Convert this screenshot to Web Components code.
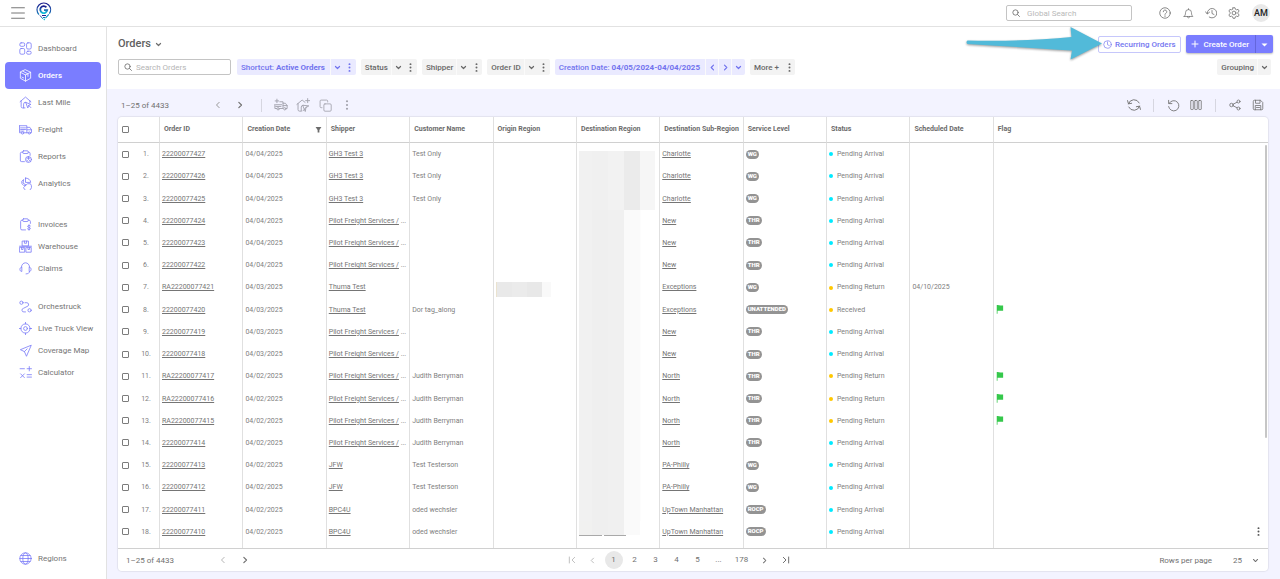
<!DOCTYPE html>
<html lang="en">
<head>
<meta charset="utf-8">
<meta name="viewport" content="width=device-width, initial-scale=1">
<title>Orders</title>
<style>
  html, body { margin: 0; }
  body { font-family: Roboto, "Liberation Sans", sans-serif; font-size: 8px; color: #6f6f6f; background: #fff; }
</style>
</head>
<body>
<order-app></order-app>

<script>
const ICONS = {
  menu: '<path d="M1 3h22M1 12h22M1 21h22"/>',
  down: '<path d="M5 8.500l7 7 7-7"/>',
  left: '<path d="M15.500 4l-8 8 8 8"/>',
  right: '<path d="M8.500 4l8 8-8 8"/>',
  first: '<path d="M20 4l-8 8 8 8M4 3v18"/>',
  last: '<path d="M4 4l8 8-8 8M20 3v18"/>',
  plus: '<path d="M12 3v18M3 12h18"/>',
  caret: '<path d="M4 9h16l-8 8z" fill="currentColor" stroke="none"/>',
  sort: '<path d="M2 3h20l-7 11v8h-6v-8z" fill="currentColor" stroke="none"/>',
  dots: '<g fill="currentColor" stroke="none"><circle cx="12" cy="3" r="2.600"/><circle cx="12" cy="12" r="2.600"/><circle cx="12" cy="21" r="2.600"/></g>',
  search: '<circle cx="10.500" cy="10.500" r="8"/><path d="M16.500 16.500l6 6"/>',
  help: '<circle cx="12" cy="12" r="10.500"/><path d="M8.500 9.500a3.500 3.500 0 1 1 5 3.200c-1.200.6-1.500 1-1.500 2.300M12 17.500v1.500"/>',
  bell: '<path d="M2.500 18.500h19c-2-2-3-4-3-8.500a6.500 6.500 0 0 0-13 0c0 4.500-1 6.500-3 8.500zM12 1.500v2M9.500 18.500a2.500 3 0 0 0 5 0"/>',
  history: '<path d="M4.500 13a9.500 9.500 0 1 1 4 7.200M1 9.500l3.500 4.500L9 10.500M14 7v6l4 2"/>',
  gear: '<path d="M10 1.500h4l.8 3 2.400 1.200 3-1 2 3.400-2.200 2.300v3.200l2.200 2.300-2 3.400-3-1-2.400 1.200-.8 3h-4l-.8-3-2.400-1.200-3 1-2-3.400L4 13.600v-3.200L1.800 8.100l2-3.400 3 1 2.400-1.200z"/><circle cx="12" cy="12" r="3.800"/>',
  clock: '<circle cx="12" cy="12" r="10"/><path d="M12 5v7.500l5 2.500"/>',
  dash: '<rect x="1.500" y="1.500" width="9" height="6.500" rx="2.500"/><rect x="1.500" y="12" width="9" height="10.500" rx="2.500"/><rect x="14" y="1.500" width="8.500" height="11.500" rx="2.500"/><rect x="14" y="17" width="8.500" height="5.500" rx="2.500"/>',
  box: '<path d="M12 1.500l9.500 4.500v11L12 22.500 2.500 17V6zM2.500 6L12 11l9.500-5M12 11v11.500M7 4l9.500 5v4.500M5.500 15l3 1.500"/>',
  home: '<path d="M2 10.500L12 2l10 8.500M4 9v10.500a2.500 2.500 0 0 0 2.500 2.500H11M20 9v3M8.500 22v-7a3.500 3.500 0 0 1 4-3.500M13 12l9 3.500-4 1.500-1.500 4.500zM17.500 17l4.500 4.500"/>',
  truck: '<path d="M1 5h13.500v13H9.500M14.500 8h5.500l3 4.500V18h-1.500M16.500 18h-2M1 5v13h3M14.500 12.500H23M3 9h9M3 12h9M3 15h6"/><circle cx="6.500" cy="18.500" r="2"/><circle cx="19" cy="18.500" r="2"/>',
  report: '<path d="M7 4H5a2.500 2.500 0 0 0-2.500 2.500v12A2.500 2.500 0 0 0 5 21.500h5M17 4h1a2.500 2.500 0 0 1 2.500 2.500V10"/><rect x="7" y="1.500" width="10" height="5" rx="1.500"/><circle cx="17.500" cy="17.500" r="5.500"/><path d="M17.500 12v5.500l4 3.500M15 15l5 0M14 18.500l3 2.500"/>',
  chart: '<path d="M8 5A5.500 5.500 0 1 0 13 15L8 11.500zM12 2v8h9.500A9 8 0 0 0 12 2zM21.500 13a7.500 7.500 0 1 1-13 6.500L15 13z"/>',
  invoice: '<path d="M7 4H5.500A2.500 2.500 0 0 0 3 6.500v13A2.500 2.500 0 0 0 5.500 22H12M17 4h1.500A2.500 2.500 0 0 1 21 6.500V10"/><rect x="7" y="1.500" width="10" height="5" rx="1.500"/><path d="M21 14.500c-1.500-1.500-5.500-1-5 1.200.4 2 5 1.200 5 3.600 0 2.200-4 2.500-5.500.7M18.500 12.500v10"/>',
  warehouse: '<path d="M6.500 2h11v9h-11zM1 11.500h22M1.500 13.500h9v9h-9zM13.500 13.500h9v9h-9zM10 2v4h4V2M4.500 13.500v4h3v-4M16.500 13.500v4h3v-4"/>',
  headset: '<path d="M4.500 9.500C4.500 5 8 1.500 12 1.500S19.500 5 19.500 9.500M4.500 9.500c-4 .5-4 8 0 8zM19.500 9.500c4 .5 4 8 0 8zM19.500 17.500c0 3-3 4.500-6.500 4.500"/>',
  route: '<circle cx="4.500" cy="5" r="3"/><circle cx="19.500" cy="19" r="3"/><path d="M11 5h3.500a3.500 3.500 0 0 1 2 6.200L8 15.500A3.300 3.300 0 0 0 9 22h3"/>',
  target: '<circle cx="12" cy="12" r="8.500"/><circle cx="12" cy="12" r="3.500"/><path d="M12 0v3.500M12 20.500V24M0 12h3.500M20.500 12H24"/>',
  plane: '<path d="M22 2.500L2.500 10.500l7.500 3.500 3.500 8zM10 14l5-5"/>',
  calc: '<path d="M2 5h8M15 5h8M19 1v8M3 14.500l7 7M10 14.500l-7 7M15 16h8M15 20.500h8"/>',
  globe: '<circle cx="12" cy="12" r="10.500"/><ellipse cx="12" cy="12" rx="5" ry="10.500"/><path d="M1.500 12h21M3.500 6.500h17M3.500 17.500h17"/>',
  addtruck: '<path d="M5 2v6M2 5h6M10 6.500h5.500V18h-6M1.500 11v7h3M15.500 9h4l3 4v5H21M15.500 13h7M3 11.500h10M3 14.500h9"/><circle cx="7" cy="18.500" r="2"/><circle cx="18.500" cy="18.500" r="2"/>',
  addhome: '<path d="M1.500 11L10.500 3.500l5 4M3.500 9.500V20A2.500 2.500 0 0 0 6 22.500h3M9 22v-6.500a3 3 0 0 1 3-3M20 1v7M16.500 4.500h7M12 12.500l10 1-5 3-1 6zM18 15l-6 7"/>',
  copy: '<rect x="9" y="9" width="13.500" height="13.500" rx="2"/><path d="M5.500 16H4a2 2 0 0 1-2-2V4a2 2 0 0 1 2-2h10a2 2 0 0 1 2 2v1.500"/>',
  refresh: '<path d="M2.500 10A10 10 0 0 1 21 8.500M21.500 14A10 10 0 0 1 3 15.500M1 4.500L2.500 10l5.500-1M23 19.500L21.500 14l-5.500 1"/>',
  undo: '<path d="M4 8a9.500 9.500 0 1 1-1 6M3 2.500V8.500h6"/>',
  columns: '<rect x="1.500" y="3" width="5" height="18" rx="1"/><rect x="9.500" y="3" width="5" height="18" rx="1"/><rect x="17.500" y="3" width="5" height="18" rx="1"/>',
  share: '<circle cx="5" cy="12" r="3.500"/><circle cx="19" cy="5" r="3"/><circle cx="19" cy="19" r="3"/><path d="M8 10.500L16.300 6.400M8 13.500l8.300 4.100"/>',
  save: '<path d="M2.500 4.500a2 2 0 0 1 2-2H17l4.500 4.500v12.500a2 2 0 0 1-2 2h-15a2 2 0 0 1-2-2zM7 2.500v6h9v-6M6.500 21.500V13h11v8.500M9 17h6"/>',
  flag: '<path d="M2 0h2l8 1.500h7v14l-8-.5-7 .5V23H2z" fill="currentColor" stroke="none"/>'
};

function define(name, html, setup) {
  const tpl = document.createElement('template');
  tpl.innerHTML = html;
  customElements.define(name, class extends HTMLElement {
    constructor() {
      super();
      this.attachShadow({ mode: 'open' }).append(tpl.content.cloneNode(true));
    }
    connectedCallback() {
      if (setup && !this.ready) { this.ready = true; setup(this, this.shadowRoot); }
    }
  });
}

/* <ui-icon name size weight>: one stroked glyph in the current colour */
define('ui-icon', `<style>
  :host { display: inline-flex; flex: none; }
  svg { display: block; fill: none; stroke: currentColor; stroke-linecap: round; stroke-linejoin: round; }
</style>`, (el, root) => {
  const s = el.getAttribute('size') || 12;
  root.innerHTML += `<svg width="${s}" height="${s}" viewBox="0 0 24 24" stroke-width="${el.getAttribute('weight') || 1.6}" aria-hidden="true">${ICONS[el.getAttribute('name')]}</svg>`;
});

/* <icon-button icon label size> */
define('icon-button', `<style>
  :host { display: inline-flex; flex: none; }
  button { display: flex; align-items: center; justify-content: center; width: var(--w, 18px); height: 18px; padding: 0; border: 0; background: none; color: inherit; cursor: pointer; }
</style><button type="button"></button>`, (el, root) => {
  const b = root.querySelector('button');
  b.setAttribute('aria-label', el.getAttribute('label'));
  b.innerHTML = `<ui-icon name="${el.getAttribute('icon')}" size="${el.getAttribute('size') || 13}" weight="${el.getAttribute('weight') || 1.6}"></ui-icon>`;
});

define('brand-mark', `<style>:host { display: block; } svg { display: block; }</style>
<svg width="16" height="19" viewBox="0 0 16 19" role="img" aria-label="Home">
  <defs><linearGradient id="g" x1="0" y1="0" x2="0" y2="1"><stop offset="0" stop-color="#1c1a8c"/><stop offset=".5" stop-color="#1d5fae"/><stop offset="1" stop-color="#10c4dc"/></linearGradient></defs>
  <g fill="none" stroke="url(#g)">
    <path d="M3 12.600A6.800 6.800 0 1 1 12.600 12.600L7.800 18" stroke-width="1.200" stroke-dasharray="30 1 5 1 20"/>
    <path d="M10.400 5.300A3.500 3.500 0 1 0 11.200 8.200H8" stroke-width="1.800"/>
    <path d="M4 13.500l3 3.500M6 13.500h4M7 15.500h2" stroke-width="1"/>
  </g>
</svg>`);

define('app-topbar', `<style>
  :host { display: flex; align-items: center; height: 26px; border-bottom: 1px solid #e2e2e2; background: #fff; padding: 0 10px; color: #6d6d6d; }
  .menu { --w: 15px; }
  brand-mark { margin: 0 auto 4px 11px; }
  .search { display: flex; align-items: center; gap: 7px; box-sizing: border-box; width: 126px; height: 16px; padding: 0 5px; border: 1px solid #c4c4c4; border-radius: 2px; margin-right: 24px; }
  input { flex: 1; min-width: 0; border: 0; padding: 0; outline: 0; background: none; font: inherit; color: #555; }
  input::placeholder { color: #b9b9b9; opacity: 1; }
  .tools { display: flex; align-items: center; gap: 5px; }
  .me { width: 18px; height: 18px; border: 0; border-radius: 50%; padding: 0; margin-left: 4px; background: #e9e9e9; color: #222; font: 500 9px/18px Roboto, sans-serif; }
</style>
<icon-button class="menu" icon="menu" size="14" label="Menu"></icon-button>
<brand-mark></brand-mark>
<label class="search"><ui-icon name="search" size="8" weight="2.500"></ui-icon><input type="search" aria-label="Global Search" placeholder="Global Search"></label>
<div class="tools">
  <icon-button icon="help" label="Help" size="12"></icon-button>
  <icon-button icon="bell" label="Notifications" size="11"></icon-button>
  <icon-button icon="history" label="History" size="12"></icon-button>
  <icon-button icon="gear" label="Settings" size="12"></icon-button>
  <button class="me" type="button">AM</button>
</div>`);

define('nav-item', `<style>
  :host { display: block; }
  a { display: flex; align-items: center; gap: 6px; height: var(--item, 22px); padding-left: 14px; border-radius: 4px; color: #757575; text-decoration: none; white-space: nowrap; }
  ui-icon { color: #7b7df8; }
  :host([active]) a { background: #7a7dff; color: #fff; font-weight: 500; }
  :host([active]) ui-icon { color: #fff; }
</style><a href="#"><ui-icon></ui-icon><slot></slot></a>`, (el, root) => {
  root.querySelector('ui-icon').outerHTML = `<ui-icon name="${el.getAttribute('icon')}" size="13" weight="1.500"></ui-icon>`;
  if (el.hasAttribute('active')) root.querySelector('a').setAttribute('aria-current', 'page');
});

define('app-sidebar', `<style>
  :host { display: flex; flex-direction: column; gap: 16px; box-sizing: border-box; width: 107px; flex: none; padding: 8px 5px 10px; border-right: 1px solid #e2e2e2; background: #fff; }
  .main { --item: 27px; }
  .foot { margin-top: auto; }
</style>
<nav class="main" aria-label="Main">
  <nav-item icon="dash">Dashboard</nav-item>
  <nav-item icon="box" active>Orders</nav-item>
  <nav-item icon="home">Last Mile</nav-item>
  <nav-item icon="truck">Freight</nav-item>
  <nav-item icon="report">Reports</nav-item>
  <nav-item icon="chart">Analytics</nav-item>
</nav>
<nav aria-label="Operations">
  <nav-item icon="invoice">Invoices</nav-item>
  <nav-item icon="warehouse">Warehouse</nav-item>
  <nav-item icon="headset">Claims</nav-item>
</nav>
<nav aria-label="Tools">
  <nav-item icon="route">Orchestruck</nav-item>
  <nav-item icon="target">Live Truck View</nav-item>
  <nav-item icon="plane">Coverage Map</nav-item>
  <nav-item icon="calc">Calculator</nav-item>
</nav>
<nav class="foot" aria-label="Regions"><nav-item icon="globe">Regions</nav-item></nav>`);

/* <filter-chip parts="down dots" tone="accent">: label followed by small icon segments */
define('filter-chip', `<style>
  :host { display: flex; flex: none; border-radius: 2px; overflow: hidden; background: #f3f3f3; color: #686868; font-weight: 500; }
  :host([tone=accent]) { background: #eaeaff; color: #7173ee; }
  button { display: flex; align-items: center; justify-content: center; height: 16px; border: 0; padding: 0; background: none; font: inherit; color: inherit; white-space: nowrap; }
  .label { padding: 0 4px; white-space: pre; }
  :host([tone=accent]) .label { padding-right: 6px; }
  .seg { width: 13px; box-shadow: -1px 0 #fafafa; }
  .dots { width: 12px; box-shadow: none; }
</style><button type="button" class="label"><slot></slot></button>`, (el, root) => {
  for (const p of (el.getAttribute('parts') || '').split(' ').filter(Boolean)) {
    const b = document.createElement('button');
    b.type = 'button';
    b.className = 'seg ' + p;
    b.setAttribute('aria-label', p === 'dots' ? 'Filter options' : p);
    b.innerHTML = `<ui-icon name="${p}" size="${p === 'dots' ? 9 : 7}" weight="4"></ui-icon>`;
    root.append(b);
  }
});

define('page-header', `<style>
  :host { display: block; position: relative; padding: 8px 7px 14px 11px; }
  .top, .filters { display: flex; align-items: center; }
  .top { height: 18px; margin-bottom: 6px; gap: 5px; }
  h1 { margin: 0; font-size: 11px; line-height: 18px; font-weight: 500; color: #616161; }
  .views { --w: 8px; margin: 0 auto 0 -2px; }
  .recurring, .create { display: flex; align-items: center; font: inherit; font-weight: 500; height: 17px; box-sizing: border-box; }
  .recurring { gap: 3px; padding: 0 4px; border: 1px solid #c6c7fb; border-radius: 2px; background: #fff; color: #7476f0; }
  .split { display: flex; border-radius: 2px; background: #7a7dff; box-shadow: 0 1px 2px #0004; }
  .create { gap: 5px; height: 18px; border: 0; padding: 0 6px 0 5px; background: none; color: #fff; }
  .create + .create { width: 18px; justify-content: center; padding: 0; border-left: 1px solid #6466dc; }
  .filters { gap: 5px; }
  .search { display: flex; align-items: center; gap: 4px; box-sizing: border-box; width: 113px; height: 16px; padding: 0 5px; border: 1px solid #c4c4c4; border-radius: 2px; margin-right: 1px; }
  input { flex: 1; min-width: 0; border: 0; padding: 0; outline: 0; background: none; font: inherit; color: #555; }
  input::placeholder { color: #b5b5b5; opacity: 1; }
  .group { margin: 0 2px 0 auto; }
  .pointer { position: absolute; right: 178px; top: 0; width: 136px; height: 35px; filter: drop-shadow(0 1px 1px #0006); }
</style>
<div class="top">
  <h1>Orders</h1><icon-button class="views" icon="down" size="7" weight="4" label="Switch view"></icon-button>
  <button type="button" class="recurring"><ui-icon name="clock" size="9" weight="1.800"></ui-icon>Recurring Orders</button>
  <div class="split">
    <button type="button" class="create"><ui-icon name="plus" size="8" weight="3"></ui-icon>Create Order</button>
    <button type="button" class="create" aria-label="More ways to create"><ui-icon name="caret" size="9"></ui-icon></button>
  </div>
</div>
<div class="filters">
  <label class="search"><ui-icon name="search" size="8" weight="2.500"></ui-icon><input type="search" aria-label="Search Orders" placeholder="Search Orders"></label>
  <filter-chip tone="accent" parts="down dots"><span>Shortcut: <b>Active Orders</b></span></filter-chip>
  <filter-chip parts="down dots">Status</filter-chip>
  <filter-chip parts="down dots">Shipper</filter-chip>
  <filter-chip parts="down dots">Order ID</filter-chip>
  <filter-chip tone="accent" parts="left right down"><span>Creation Date: <b>04/05/2024-04/04/2025</b></span></filter-chip>
  <filter-chip parts="dots">More +</filter-chip>
  <filter-chip class="group" parts="down">Grouping</filter-chip>
</div>
<svg class="pointer" viewBox="0 0 136 35" aria-hidden="true"><path d="M1.500 13.500Q60 14.500 105.500 10L104.500 0 136 16.500 104.500 32.500 106 23.500Q60 20.500 1.500 17Q-.5 15 1.500 13.500z" fill="#52bad9"/></svg>`);

define('grid-toolbar', `<style>
  :host { display: flex; align-items: center; height: 28px; padding: 4px 1px 0 3px; box-sizing: border-box; color: #707070; }
  .range { margin-right: 40px; white-space: nowrap; }
  .row { display: flex; align-items: center; gap: 4px; }
  .prev { color: #999; }
  .bulk { color: #a3a3ad; margin: 0 auto 0 12px; }
  i { width: 1px; height: 13px; background: #d6d6e0; margin-right: 6px; }
  .tools { gap: 5px; }
  .tools i { margin: 0 5px; }
</style>
<span class="range">1–25 of 4433</span>
<div class="row"><icon-button class="prev" icon="left" size="8" weight="3" label="Previous page"></icon-button><icon-button icon="right" size="8" weight="3.500" label="Next page"></icon-button></div>
<div class="row bulk"><i></i><icon-button icon="addtruck" label="Assign truck" size="14"></icon-button><icon-button icon="addhome" label="Assign last mile" size="14"></icon-button><icon-button icon="copy" label="Duplicate" size="13"></icon-button><icon-button icon="dots" label="More actions" size="10"></icon-button></div>
<div class="row tools"><icon-button icon="refresh" label="Refresh" size="14"></icon-button><i></i><icon-button icon="undo" label="Reset" size="13"></icon-button><icon-button icon="columns" label="Columns" size="12"></icon-button><i></i><icon-button icon="share" label="Share" size="12"></icon-button><icon-button icon="save" label="Save" size="12"></icon-button></div>`);

/* order id, date, shipper, customer, sub-region, service level, status, scheduled, flag */
const PILOT = 'Pilot Freight Services /';
const ORDERS = [
  ['22200077427', '04/04/2025', 'GH3 Test 3', 'Test Only', 'Charlotte', 'WG', 'Pending Arrival'],
  ['22200077426', '04/04/2025', 'GH3 Test 3', 'Test Only', 'Charlotte', 'WG', 'Pending Arrival'],
  ['22200077425', '04/04/2025', 'GH3 Test 3', 'Test Only', 'Charlotte', 'WG', 'Pending Arrival'],
  ['22200077424', '04/04/2025', PILOT, '', 'New', 'THR', 'Pending Arrival'],
  ['22200077423', '04/04/2025', PILOT, '', 'New', 'THR', 'Pending Arrival'],
  ['22200077422', '04/04/2025', PILOT, '', 'New', 'THR', 'Pending Arrival'],
  ['RA22200077421', '04/03/2025', 'Thuma Test', '', 'Exceptions', 'WG', 'Pending Return', '04/10/2025'],
  ['22200077420', '04/03/2025', 'Thuma Test', 'Dor tag_along', 'Exceptions', 'UNATTENDED', 'Received', '', 1],
  ['22200077419', '04/03/2025', PILOT, '', 'New', 'THR', 'Pending Arrival'],
  ['22200077418', '04/03/2025', PILOT, '', 'New', 'THR', 'Pending Arrival'],
  ['RA22200077417', '04/02/2025', PILOT, 'Judith Berryman', 'North', 'THR', 'Pending Return', '', 1],
  ['RA22200077416', '04/02/2025', PILOT, 'Judith Berryman', 'North', 'THR', 'Pending Return', '', 1],
  ['RA22200077415', '04/02/2025', PILOT, 'Judith Berryman', 'North', 'THR', 'Pending Return', '', 1],
  ['22200077414', '04/02/2025', PILOT, 'Judith Berryman', 'North', 'THR', 'Pending Arrival'],
  ['22200077413', '04/02/2025', 'JFW', 'Test Testerson', 'PA-Philly', 'WG', 'Pending Arrival'],
  ['22200077412', '04/02/2025', 'JFW', 'Test Testerson', 'PA-Philly', 'WG', 'Pending Arrival'],
  ['22200077411', '04/02/2025', 'BPC4U', 'oded wechsler', 'UpTown Manhattan', 'ROCP', 'Pending Arrival'],
  ['22200077410', '04/02/2025', 'BPC4U', 'oded wechsler', 'UpTown Manhattan', 'ROCP', 'Pending Arrival']
];
const HEADS = ['Order ID', 'Creation Date', 'Shipper', 'Customer Name', 'Origin Region', 'Destination Region', 'Destination Sub-Region', 'Service Level', 'Status', 'Scheduled Date', 'Flag'];

define('orders-table', `<style>
  :host { display: flex; flex-direction: column; flex: 1; position: relative; }
  table { flex: 1; width: 100%; table-layout: fixed; border-collapse: separate; border-spacing: 0; font-size: 7px; }
  col.pick { width: 42px; }
  col.data { width: 7.25%; }
  th, td { box-sizing: border-box; border-right: 1px solid #e0e0e0; padding: 0 2px; text-align: left; white-space: nowrap; overflow: hidden; line-height: 9px; vertical-align: middle; }
  th:last-child, td:last-child { border-right: 0; }
  th { height: 26px; padding: 0 4px; font-weight: 700; color: #6b6b6b; border-bottom: 1px solid #d0d0d0; }
  td { line-height: 22px; color: #808080; }
  a { color: #757575; text-underline-offset: 1px; }
  .flex { display: flex; align-items: center; justify-content: space-between; }
  .pick .flex, th:first-child .flex { justify-content: flex-start; }
  td.pick, th:first-child { padding: 0 0 0 4px; }
  .num { flex: 1; text-align: center; padding-left: 4px; }
  input { appearance: none; box-sizing: border-box; width: 7px; height: 7px; margin: 0; border: 1px solid #7c7c7c; border-radius: 1px; background: #fff; flex: none; }
  .level { padding: 0 2px 1px; border-radius: 5px; background: #939393; color: #fff; font-size: 6px; font-weight: 900; line-height: 8px; }
  .state::before { content: ""; display: inline-block; width: 4px; height: 4px; margin: 0 4px 0 0; border-radius: 50%; background: #00eaff; vertical-align: middle; }
  .state.amber::before { background: #ffc800; }
  .flag { color: #35c84b; }
  icon-button { --w: 12px; margin: 0 2px 0 auto; color: #555; }
  .mask { background: linear-gradient(90deg, #f1f1f1 13px, #efefef 13px 29px, #f0f0f0 29px 45px, #fafafa 45px 61px, #fdfdfd 61px) no-repeat 2px 0 / 62px 100%; }
  .mask.wide { background: linear-gradient(90deg, #f1f1f1 13px, #f0f0f0 13px 29px, #f2f2f2 29px 45px, #ebebeb 45px 61px, #f6f6f6 61px) no-repeat 2px 0 / 76px 100%; }
  .mask.wide.start { background-position: 2px 8px; }
  .mask.end { background: linear-gradient(90deg, #a9a9a9 23px, #fff 23px 25px, #a9a9a9 25px) no-repeat 2px 14px / 47px 1px, linear-gradient(90deg, #f1f1f0 13px, #efefef 13px 29px, #f0f0f0 29px 45px, #fafafa 45px) no-repeat 2px 0 / 61px 14px; }
  .smudge { background: linear-gradient(90deg, #ebe3cf 1px, #e9e9e9 1px 16px, #ebebeb 16px 31px, #e8e8e8 31px 46px, #f9f9f9 46px) no-repeat 2px 6px / 55px 15px; }
  .pad td { height: 5px; line-height: 0; }
  .thumb { position: absolute; right: 1px; top: 28px; width: 2px; height: 68%; background: #c6c6c6; border-radius: 1px; }
</style>
<table>
  <colgroup><col class="pick"></colgroup>
  <thead><tr><th><div class="flex"><input type="checkbox" aria-label="Select all"></div></th></tr></thead>
  <tbody></tbody>
</table>
<div class="thumb"></div>`, (el, root) => {
  const group = root.querySelector('colgroup');
  const head = root.querySelector('thead tr');
  HEADS.forEach((h, i) => {
    const c = document.createElement('col');
    if (i < 10) c.className = 'data';
    group.append(c);
    head.insertAdjacentHTML('beforeend', h === 'Creation Date'
      ? `<th scope="col" aria-sort="descending"><div class="flex">${h}<ui-icon name="sort" size="7"></ui-icon></div></th>`
      : `<th scope="col">${h}</th>`);
  });
  const link = t => `<a href="#">${t}</a>`;
  const last = ORDERS.length - 1;
  root.querySelector('tbody').innerHTML = ORDERS.map((o, i) => {
    const [id, date, ship, cust, sub, level, state, sched = '', flag] = o;
    const mask = i === 0 ? 'mask wide start' : i < 3 ? 'mask wide' : i === last ? 'mask end' : 'mask';
    return `<tr><td class="pick"><div class="flex"><input type="checkbox" aria-label="Select order ${id}"><span class="num">${i + 1}.</span></div></td>
      <td>${link(id)}</td><td>${date}</td><td>${link(ship)}${ship === PILOT ? ' ...' : ''}</td><td>${cust}</td>
      <td class="${i === 6 ? 'smudge' : ''}"></td><td class="${mask}"></td><td>${link(sub)}</td>
      <td><div class="flex"><span class="level">${level}</span></div></td>
      <td><span class="state ${state === 'Pending Arrival' ? '' : 'amber'}">${state}</span></td><td>${sched}</td>
      <td><div class="flex">${flag ? '<ui-icon class="flag" name="flag" size="9"></ui-icon>' : ''}${i === last ? '<icon-button icon="dots" size="9" label="Row actions"></icon-button>' : ''}</div></td></tr>`;
  }).join('') + `<tr class="pad">${'<td></td>'.repeat(12)}</tr>`;
});

define('grid-pager', `<style>
  :host { display: grid; grid-template-columns: 1fr auto 1fr; align-items: center; height: 22px; border-top: 1px solid #d0d0d0; color: #707070; }
  .row { display: flex; align-items: center; }
  .range { margin: 0 36px 0 8px; white-space: nowrap; }
  .left { gap: 4px; }
  .pages { gap: 3px; margin-right: 29px; }
  .page { width: 18px; height: 18px; padding: 0; border: 0; border-radius: 50%; background: none; font: inherit; line-height: 18px; color: inherit; text-align: center; }
  .page[aria-current] { background: #e8e8e8; }
  .wide { width: 22px; }
  .off { color: #b5b5b5; }
  .right { justify-content: flex-end; padding-right: 9px; }
  .right label { margin-right: 21px; }
  select { appearance: none; border: 0; background: none; padding: 0; width: 19px; font: inherit; color: inherit; }
</style>
<div class="row left"><span class="range">1–25 of 4433</span><icon-button class="off" icon="left" size="8" weight="3" label="Previous page"></icon-button><icon-button icon="right" size="8" weight="3.500" label="Next page"></icon-button></div>
<nav class="row pages" aria-label="Pages">
  <icon-button class="off" icon="first" size="8" weight="2.500" label="First page"></icon-button>
  <icon-button class="off" icon="left" size="7" weight="3" label="Previous"></icon-button>
  <button class="page" type="button" aria-current="page">1</button>
  <button class="page" type="button">2</button>
  <button class="page" type="button">3</button>
  <button class="page" type="button">4</button>
  <button class="page" type="button">5</button>
  <span class="page">...</span>
  <button class="page wide" type="button">178</button>
  <icon-button icon="right" size="7" weight="3.500" label="Next"></icon-button>
  <icon-button icon="last" size="8" weight="3" label="Last page"></icon-button>
</nav>
<div class="row right"><label for="rows">Rows per page</label><select id="rows"><option>25</option><option>50</option><option>100</option></select><ui-icon name="down" size="7" weight="3.500"></ui-icon></div>`);

define('order-app', `<style>
  :host { display: flex; flex-direction: column; min-height: 100vh; }
  .body { display: flex; flex: 1; }
  main { display: flex; flex-direction: column; flex: 1; min-width: 0; }
  .grid { display: flex; flex-direction: column; flex: 1; padding: 0 12px 8px 11px; background: #f3f3ff; }
  .card { display: flex; flex-direction: column; flex: 1; background: #fff; border-radius: 4px; box-shadow: 0 0 1px 1px #0001; }
</style>
<app-topbar></app-topbar>
<div class="body">
  <app-sidebar></app-sidebar>
  <main>
    <page-header></page-header>
    <section class="grid" aria-label="Orders">
      <grid-toolbar></grid-toolbar>
      <div class="card"><orders-table></orders-table><grid-pager></grid-pager></div>
    </section>
  </main>
</div>`);
</script>
</body>
</html>
